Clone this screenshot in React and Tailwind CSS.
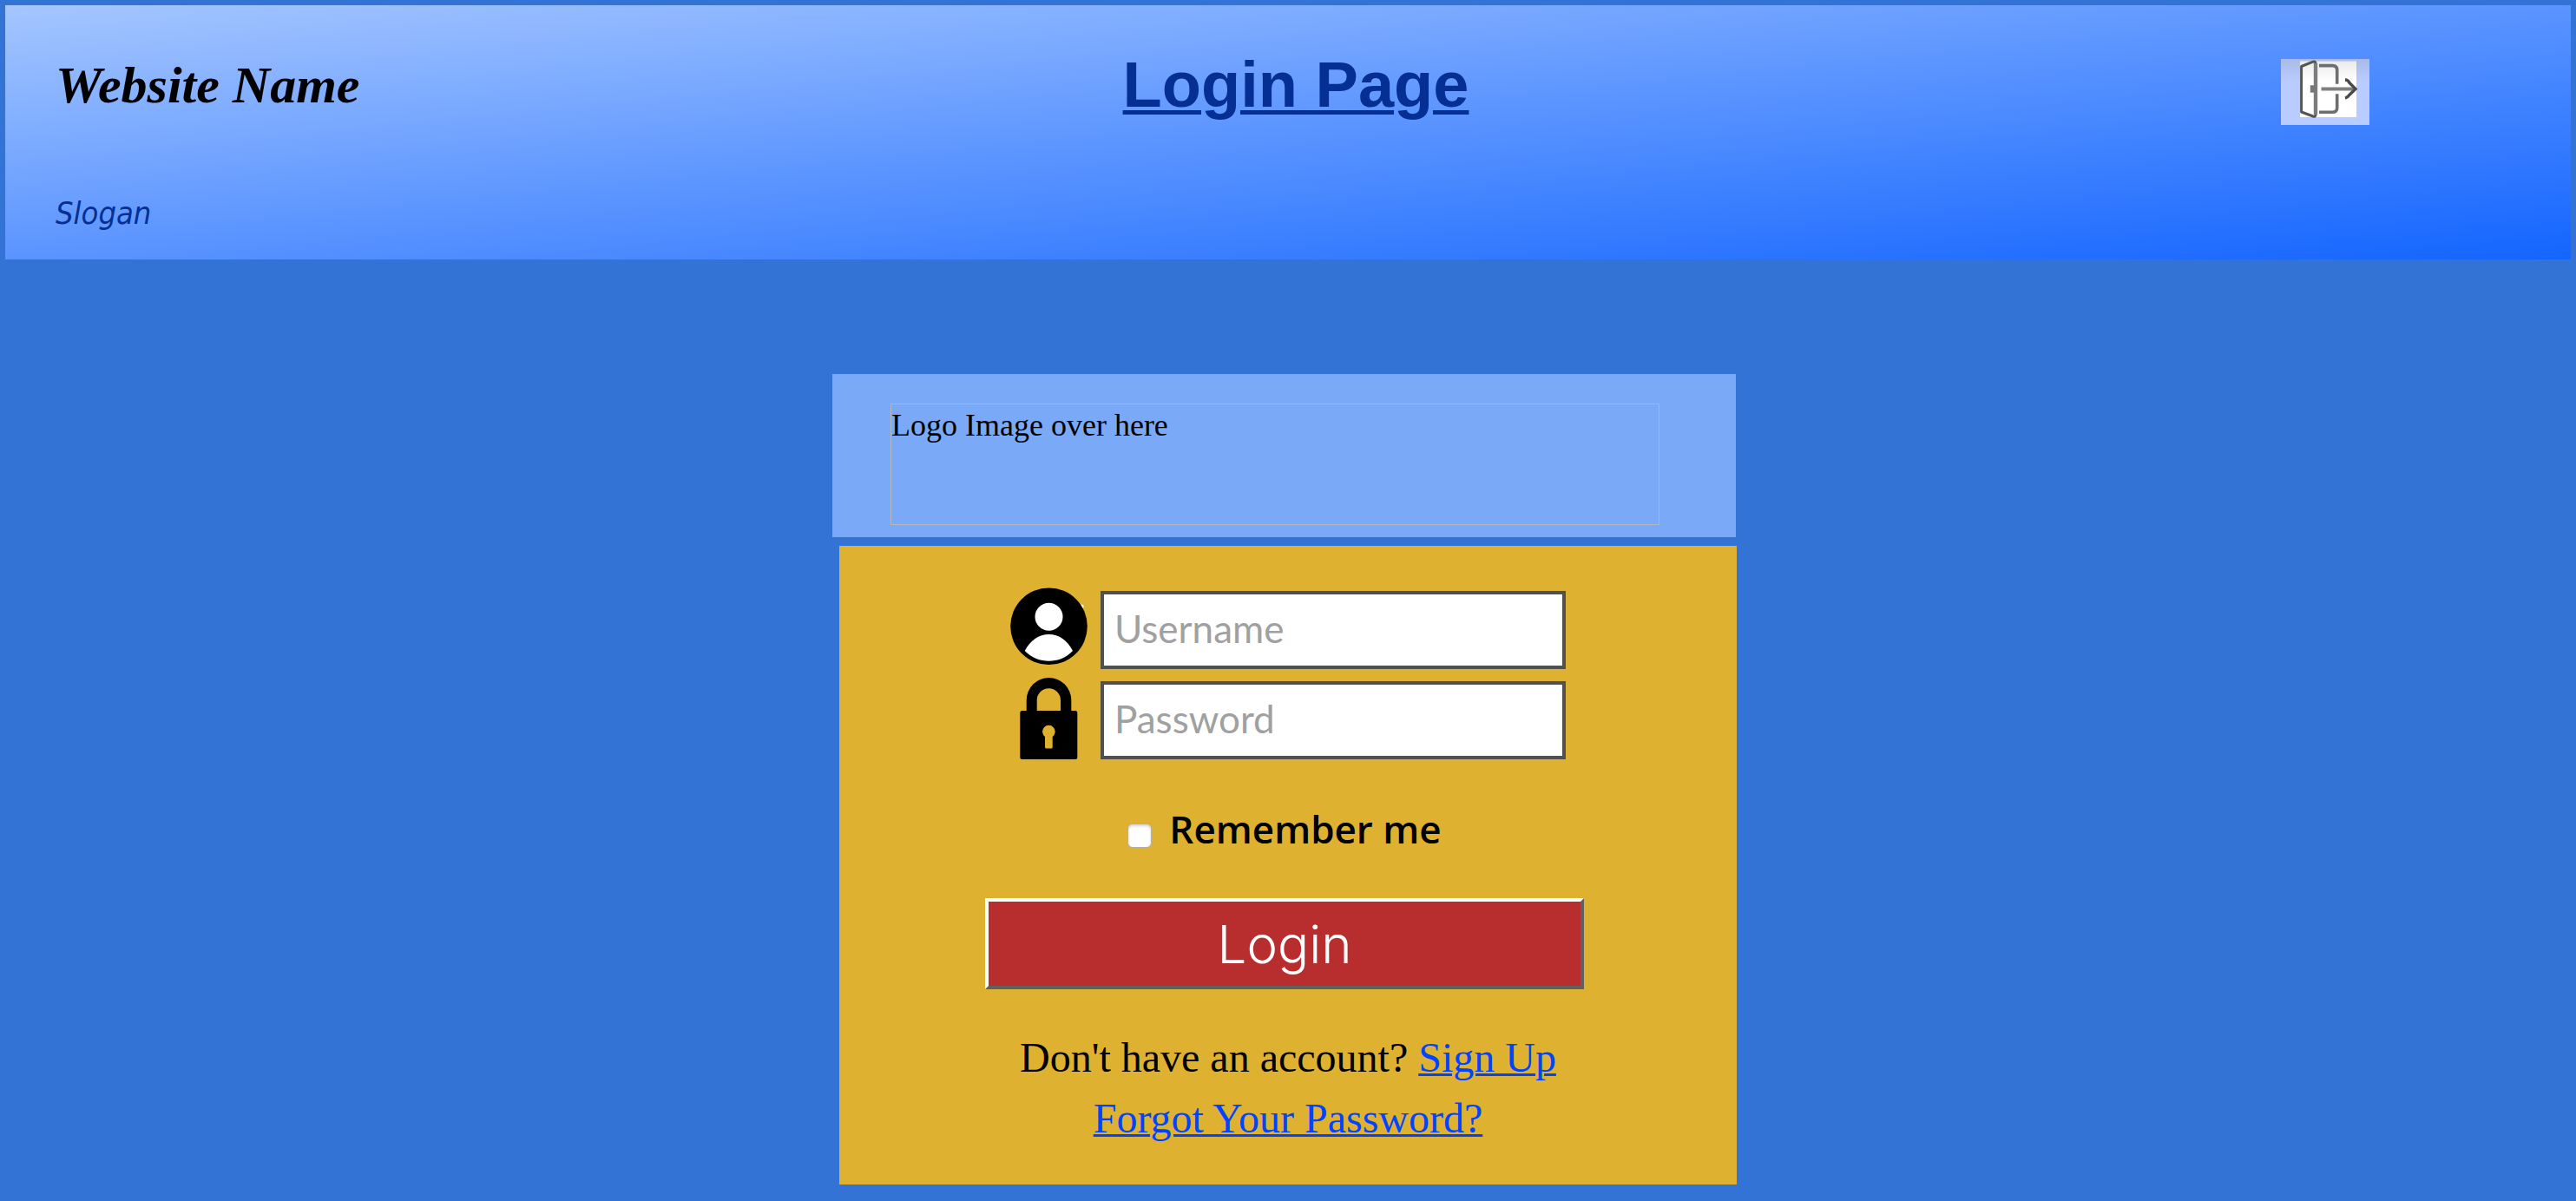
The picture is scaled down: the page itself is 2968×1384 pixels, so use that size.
function ExitIcon() {
  return (
    <svg viewBox="0 0 102 76" className="block h-[76px] w-[102px]" fill="none" aria-hidden="true">
      <defs>
        <linearGradient id="exit-shade" x1="0" y1="0" x2="0" y2="1">
          <stop offset="0" stopColor="#000" stopOpacity="0.09" />
          <stop offset="1" stopColor="#000" stopOpacity="0" />
        </linearGradient>
      </defs>
      <rect width="102" height="76" fill="#b9ccff" />
      <rect x="22" y="2.5" width="65" height="64.5" fill="#fff" />
      <rect width="102" height="26" fill="url(#exit-shade)" />
      <path d="M44 7.6h15.5q5.200 0 5.200 5.200v16M64.700 40.300v16q0 5-5.200 5H44" stroke="#6e6e6e" strokeWidth="3.6" />
      <path d="M23.600 8.500 37 3.200q3-.8 3 2V64q0 3-3 2L23.600 61z" stroke="#555" strokeWidth="3" strokeLinejoin="round" />
      <path d="M40 5v59" stroke="#7c7c7c" strokeWidth="4.4" />
      <rect x="33.8" y="30.3" width="6" height="8.4" fill="#777" />
      <path d="M46.500 34.400H85" stroke="#808080" strokeWidth="4" />
      <path d="M74 24q3.500 0 5 3.500L86 34.400l-7 6.800q-1.800 3.200-5 4" stroke="#4a4a4a" strokeWidth="3.4" />
    </svg>
  );
}

function UserIcon() {
  return (
    <svg viewBox="0 0 89 98" className="block h-[98px] w-[89px] shrink-0" aria-hidden="true">
      <circle cx="82.3" cy="22" r="2.4" fill="#fff" />
      <circle cx="44.5" cy="44.8" r="44.3" fill="#000" />
      <circle cx="44.5" cy="33.7" r="16" fill="#fff" />
      <path d="M16.700 73C23 61 33 54 44.500 54S66 61 72 73C64.500 81 54.500 84.800 44.500 84.800S24.500 81 16.700 73z" fill="#fff" />
    </svg>
  );
}

function LockIcon() {
  return (
    <svg viewBox="0 0 89 98" className="block h-[98px] w-[89px] shrink-0" aria-hidden="true">
      <path
        fillRule="evenodd"
        d="M18.700 38V25.800a25.800 25.800 0 0 1 51.600 0V38h4.500q2.500 0 2.500 2.500v51q0 2.500-2.500 2.500h-61q-2.500 0-2.500-2.500v-51q0-2.500 2.500-2.500zM30.700 38H58V26a13.650 13.650 0 0 0-27.300 0zM40 68v12q0 1.500 1.500 1.500h5.700q1.500 0 1.500-1.500V68a7.300 7.300 0 1 0-8.700 0z"
        fill="#000"
      />
    </svg>
  );
}

function Field({ id, type, label, icon }) {
  return (
    <div className="flex items-center gap-[15px]">
      <label htmlFor={id} aria-label={label}>
        {icon}
      </label>
      <input
        id={id}
        type={type}
        placeholder={label}
        className="h-[90px] min-w-0 flex-1 border-4 border-[#505050] bg-white px-3 pb-1 font-['Lato',sans-serif] text-[44px] text-black placeholder:text-[#a0a0a0]"
      />
    </div>
  );
}

export default function App() {
  return (
    <div className="min-h-screen bg-[#3273d5] p-1.5 font-['Liberation_Serif',serif] text-black">
      <header className="bg-linear-to-br/srgb from-[#a5c6ff] via-[#5a94ff] to-[#1465ff] pt-[52px] pr-10 pb-[29px] pl-[58px]">
        <div className="grid grid-cols-[1fr_auto_1fr] items-start">
          <p className="text-[60px] leading-[80px] font-bold italic">Website Name</p>
          <h1 className="font-['Liberation_Sans',sans-serif] text-[74px] leading-[80px] font-bold text-[#052f92] underline decoration-[5px] underline-offset-4">
            Login Page
          </h1>
          <button type="button" aria-label="Exit" className="mt-2.5 mr-48 justify-self-end">
            <ExitIcon />
          </button>
        </div>
        <p className="mt-[78px] font-['DejaVu_Sans_Condensed','DejaVu_Sans',sans-serif] text-[36px] leading-[48px] text-[#052f92] italic">
          Slogan
        </p>
      </header>

      <main className="mx-auto mt-[132px] w-full max-w-[1050px]">
        <section className="mr-[9px] bg-[#7aaaf7] pt-[34px] pr-[88px] pb-3.5 pl-[67px]">
          <div className="h-[140px] border border-[#b3b8c0] pt-1 text-[36px] leading-[40px]">Logo Image over here</div>
        </section>

        <form
          className="mx-2 mt-2.5 flex flex-col items-center bg-[#deb230] pt-12 pb-[41px]"
          onSubmit={(event) => event.preventDefault()}
        >
          <div className="flex w-full max-w-[640px] flex-col gap-1.5">
            <Field id="username" type="text" label="Username" icon={<UserIcon />} />
            <Field id="password" type="password" label="Password" icon={<LockIcon />} />
          </div>

          <div className="flex w-full max-w-[698px] flex-col items-center pr-2">
            <div className="mt-12 flex items-start gap-5">
              <input
                id="remember"
                type="checkbox"
                className="mt-[22px] size-7 appearance-none rounded-md border border-[#b5b0a4] bg-white shadow-[inset_0_2px_3px_#d4d4d4] checked:bg-[#0044ff]"
              />
              <label htmlFor="remember" className="font-['Open_Sans',sans-serif] text-[44px] leading-[56px] font-semibold">
                Remember me
              </label>
            </div>
            <button
              type="submit"
              className="mt-[52px] h-[105px] w-full border-4 border-t-white border-r-[#606060] border-b-[#606060] border-l-white bg-[#b82e2f] font-['Inter',sans-serif] text-[60px] leading-[80px] font-light text-white"
            >
              Login
            </button>
          </div>

          <p className="mt-11 text-[48px] leading-[70px]">
            Don't have an account?{" "}
            <a href="#signup" className="text-[#0044ff] underline decoration-[3px] underline-offset-2">
              Sign Up
            </a>
          </p>
          <a href="#forgot" className="text-[48px] leading-[70px] text-[#0044ff] underline decoration-[3px] underline-offset-2">
            Forgot Your Password?
          </a>
        </form>
      </main>
    </div>
  );
}
